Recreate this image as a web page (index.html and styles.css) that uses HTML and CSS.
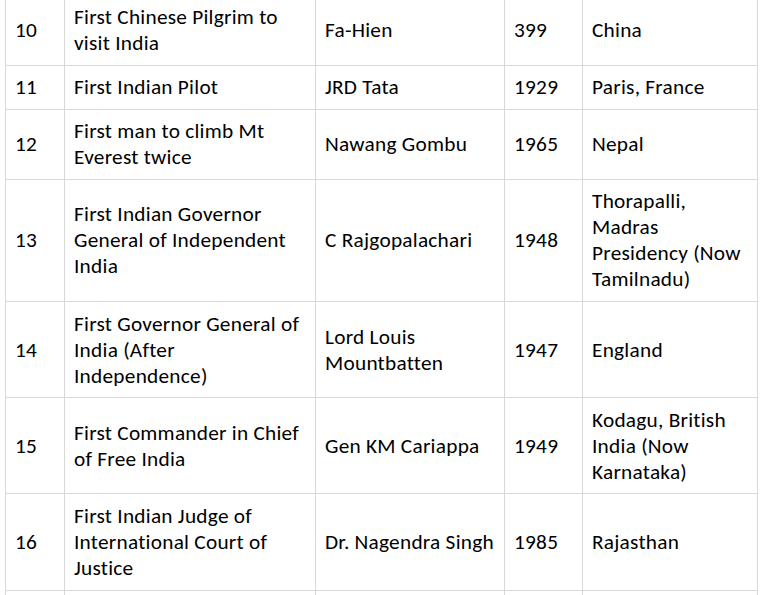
FILE: index.html
```html
<!DOCTYPE html>
<html lang="en">
<head>
<meta charset="utf-8">
<title>Firsts in India</title>
<link rel="stylesheet" href="styles.css">
</head>
<body>
<table class="facts">
  <colgroup>
    <col class="c-no">
    <col class="c-title">
    <col class="c-name">
    <col class="c-year">
    <col class="c-place">
  </colgroup>
  <tbody>
    <tr>
      <td>10</td>
      <td>First Chinese Pilgrim to<br>visit India</td>
      <td>Fa-Hien</td>
      <td>399</td>
      <td>China</td>
    </tr>
    <tr>
      <td>11</td>
      <td>First Indian Pilot</td>
      <td>JRD Tata</td>
      <td>1929</td>
      <td>Paris, France</td>
    </tr>
    <tr>
      <td>12</td>
      <td>First man to climb Mt<br>Everest twice</td>
      <td>Nawang Gombu</td>
      <td>1965</td>
      <td>Nepal</td>
    </tr>
    <tr>
      <td>13</td>
      <td>First Indian Governor<br>General of Independent<br>India</td>
      <td>C Rajgopalachari</td>
      <td>1948</td>
      <td>Thorapalli,<br>Madras<br>Presidency (Now<br>Tamilnadu)</td>
    </tr>
    <tr class="tall">
      <td>14</td>
      <td>First Governor General of<br>India (After<br>Independence)</td>
      <td>Lord Louis<br>Mountbatten</td>
      <td>1947</td>
      <td>England</td>
    </tr>
    <tr class="tall">
      <td>15</td>
      <td>First Commander in Chief<br>of Free India</td>
      <td>Gen KM Cariappa</td>
      <td>1949</td>
      <td>Kodagu, British<br>India (Now<br>Karnataka)</td>
    </tr>
    <tr class="tall last">
      <td>16</td>
      <td>First Indian Judge of<br>International Court of<br>Justice</td>
      <td>Dr. Nagendra Singh</td>
      <td>1985</td>
      <td>Rajasthan</td>
    </tr>
    <tr class="r-next">
      <td></td>
      <td></td>
      <td></td>
      <td></td>
      <td></td>
    </tr>
  </tbody>
</table>
</body>
</html>
```
FILE: styles.css
```css
html, body {
  margin: 0;
  padding: 0;
  background: #ffffff;
}

.facts {
  margin: -5px 0 0 5px;
  border-collapse: collapse;
  table-layout: fixed;
  width: 752px;
  font-family: "Carlito", "Calibri", "Lato", "Liberation Sans", sans-serif;
  font-size: 21.3px;
  letter-spacing: 0.25px;
  line-height: 26px;
  color: #000000;
}

.c-no { width: 59px; }
.c-title { width: 251px; }
.c-name { width: 189px; }
.c-year { width: 78px; }
.c-place { width: 175px; }

.facts td {
  border: 1px solid #d9d9d9;
  padding: 8px 8px 9px 9px;
  vertical-align: middle;
  white-space: nowrap;
  overflow: hidden;
}

.facts .tall td {
  padding-top: 9px;
  padding-bottom: 8px;
}

.facts .last td {
  padding-bottom: 9px;
}

.r-next td {
  height: 60px;
}
```
